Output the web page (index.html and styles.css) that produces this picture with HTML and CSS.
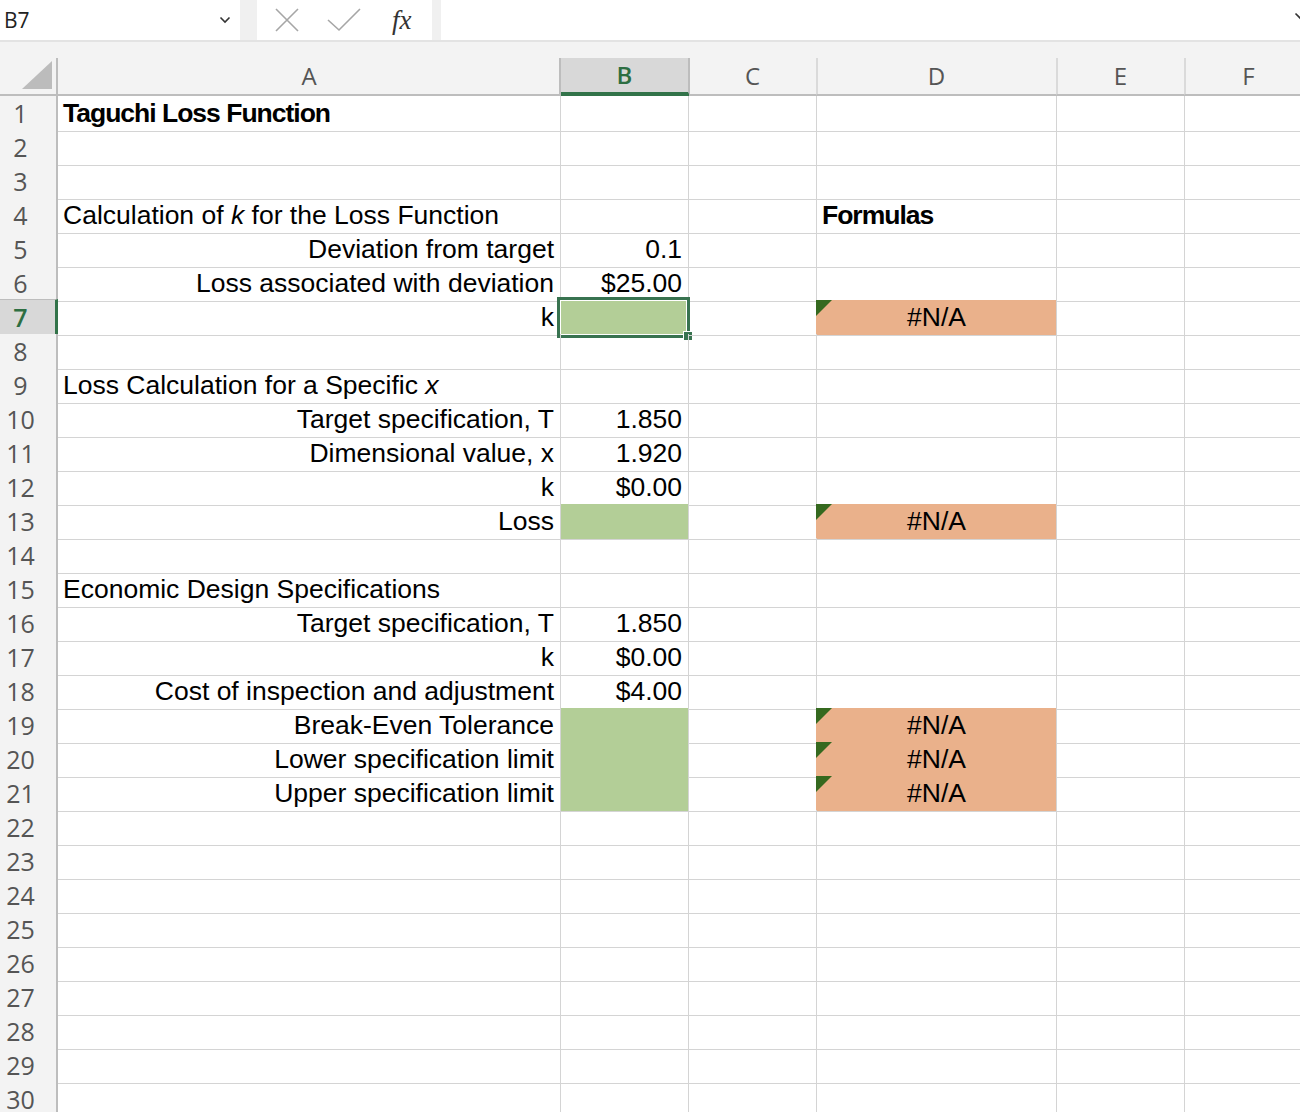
FILE: index.html
```html
<!DOCTYPE html>
<html>
<head>
    <title>Taguchi Loss Function</title>
    <link rel="stylesheet" href="styles.css">
</head>
<body>
    <div class="formula-bar">
        <div class="name-box">
            <span>B7</span>
            <svg class="chevron" width="12" height="8" viewBox="0 0 12 8"><path d="M1.5 1.5 L6 6 L10.5 1.5" fill="none" stroke="#333" stroke-width="1.6"/></svg>
        </div>
        <div class="fx-box">
            <svg width="24" height="24" viewBox="0 0 24 24"><path d="M1 1 L23 23 M23 1 L1 23" stroke="#a6a6a6" stroke-width="1.6" fill="none"/></svg>
            <svg width="34" height="24" viewBox="0 0 34 24"><path d="M1 12 L12 22 L33 1" stroke="#a6a6a6" stroke-width="1.6" fill="none"/></svg>
            <span class="fx">fx</span>
        </div>
        <div class="formula-input">
            <svg class="chevron-right" width="12" height="8" viewBox="0 0 12 8"><path d="M1.5 1.5 L6 6 L10.5 1.5" fill="none" stroke="#333" stroke-width="1.6"/></svg>
        </div>
    </div>

    <div class="sheet">
        <div class="row col-headers">
            <div class="corner"><div class="corner-tri"></div></div>
            <div class="ch">A</div>
            <div class="ch active">B</div>
            <div class="ch">C</div>
            <div class="ch">D</div>
            <div class="ch">E</div>
            <div class="ch">F</div>
        </div>

        <div class="row"><div class="rh">1</div><div class="c title">Taguchi Loss Function</div><div class="c"></div><div class="c"></div><div class="c"></div><div class="c"></div><div class="c"></div></div>
        <div class="row"><div class="rh">2</div><div class="c"></div><div class="c"></div><div class="c"></div><div class="c"></div><div class="c"></div><div class="c"></div></div>
        <div class="row"><div class="rh">3</div><div class="c"></div><div class="c"></div><div class="c"></div><div class="c"></div><div class="c"></div><div class="c"></div></div>
        <div class="row"><div class="rh">4</div><div class="c">Calculation of <i>k</i> for the Loss Function</div><div class="c"></div><div class="c"></div><div class="c title">Formulas</div><div class="c"></div><div class="c"></div></div>
        <div class="row"><div class="rh">5</div><div class="c r">Deviation from target</div><div class="c r">0.1</div><div class="c"></div><div class="c"></div><div class="c"></div><div class="c"></div></div>
        <div class="row"><div class="rh">6</div><div class="c r">Loss associated with deviation</div><div class="c r">$25.00</div><div class="c"></div><div class="c"></div><div class="c"></div><div class="c"></div></div>
        <div class="row"><div class="rh active">7</div><div class="c r">k</div><div class="c green selected"><div class="sel"><div class="handle"></div></div></div><div class="c"></div><div class="c orange note">#N/A</div><div class="c"></div><div class="c"></div></div>
        <div class="row"><div class="rh">8</div><div class="c"></div><div class="c"></div><div class="c"></div><div class="c"></div><div class="c"></div><div class="c"></div></div>
        <div class="row"><div class="rh">9</div><div class="c">Loss Calculation for a Specific <i>x</i></div><div class="c"></div><div class="c"></div><div class="c"></div><div class="c"></div><div class="c"></div></div>
        <div class="row"><div class="rh">10</div><div class="c r">Target specification, T</div><div class="c r">1.850</div><div class="c"></div><div class="c"></div><div class="c"></div><div class="c"></div></div>
        <div class="row"><div class="rh">11</div><div class="c r">Dimensional value, x</div><div class="c r">1.920</div><div class="c"></div><div class="c"></div><div class="c"></div><div class="c"></div></div>
        <div class="row"><div class="rh">12</div><div class="c r">k</div><div class="c r">$0.00</div><div class="c"></div><div class="c"></div><div class="c"></div><div class="c"></div></div>
        <div class="row"><div class="rh">13</div><div class="c r">Loss</div><div class="c green"></div><div class="c"></div><div class="c orange note">#N/A</div><div class="c"></div><div class="c"></div></div>
        <div class="row"><div class="rh">14</div><div class="c"></div><div class="c"></div><div class="c"></div><div class="c"></div><div class="c"></div><div class="c"></div></div>
        <div class="row"><div class="rh">15</div><div class="c">Economic Design Specifications</div><div class="c"></div><div class="c"></div><div class="c"></div><div class="c"></div><div class="c"></div></div>
        <div class="row"><div class="rh">16</div><div class="c r">Target specification, T</div><div class="c r">1.850</div><div class="c"></div><div class="c"></div><div class="c"></div><div class="c"></div></div>
        <div class="row"><div class="rh">17</div><div class="c r">k</div><div class="c r">$0.00</div><div class="c"></div><div class="c"></div><div class="c"></div><div class="c"></div></div>
        <div class="row"><div class="rh">18</div><div class="c r">Cost of inspection and adjustment</div><div class="c r">$4.00</div><div class="c"></div><div class="c"></div><div class="c"></div><div class="c"></div></div>
        <div class="row"><div class="rh">19</div><div class="c r">Break-Even Tolerance</div><div class="c green joined"></div><div class="c"></div><div class="c orange joined note">#N/A</div><div class="c"></div><div class="c"></div></div>
        <div class="row"><div class="rh">20</div><div class="c r">Lower specification limit</div><div class="c green joined"></div><div class="c"></div><div class="c orange joined note">#N/A</div><div class="c"></div><div class="c"></div></div>
        <div class="row"><div class="rh">21</div><div class="c r">Upper specification limit</div><div class="c green"></div><div class="c"></div><div class="c orange note">#N/A</div><div class="c"></div><div class="c"></div></div>
        <div class="row"><div class="rh">22</div><div class="c"></div><div class="c"></div><div class="c"></div><div class="c"></div><div class="c"></div><div class="c"></div></div>
        <div class="row"><div class="rh">23</div><div class="c"></div><div class="c"></div><div class="c"></div><div class="c"></div><div class="c"></div><div class="c"></div></div>
        <div class="row"><div class="rh">24</div><div class="c"></div><div class="c"></div><div class="c"></div><div class="c"></div><div class="c"></div><div class="c"></div></div>
        <div class="row"><div class="rh">25</div><div class="c"></div><div class="c"></div><div class="c"></div><div class="c"></div><div class="c"></div><div class="c"></div></div>
        <div class="row"><div class="rh">26</div><div class="c"></div><div class="c"></div><div class="c"></div><div class="c"></div><div class="c"></div><div class="c"></div></div>
        <div class="row"><div class="rh">27</div><div class="c"></div><div class="c"></div><div class="c"></div><div class="c"></div><div class="c"></div><div class="c"></div></div>
        <div class="row"><div class="rh">28</div><div class="c"></div><div class="c"></div><div class="c"></div><div class="c"></div><div class="c"></div><div class="c"></div></div>
        <div class="row"><div class="rh">29</div><div class="c"></div><div class="c"></div><div class="c"></div><div class="c"></div><div class="c"></div><div class="c"></div></div>
        <div class="row"><div class="rh">30</div><div class="c"></div><div class="c"></div><div class="c"></div><div class="c"></div><div class="c"></div><div class="c"></div></div>
    </div>
</body>
</html>
```

FILE: styles.css
```css
html, body {
    margin: 0;
    padding: 0;
    overflow: hidden;
    background-color: #fff;
}
body {
    width: 1300px;
    height: 1112px;
}
.formula-bar {
    display: flex;
    height: 40px;
    background-color: #f0f0f0;
    border-bottom: 2px solid #e3e3e3;
}
.name-box {
    width: 240px;
    background-color: #fff;
    display: flex;
    align-items: center;
    justify-content: space-between;
    padding: 0 9px 0 4px;
    box-sizing: border-box;
    font-family: "Open Sans", sans-serif;
    font-size: 21px;
    color: #222;
}
.fx-box {
    width: 175px;
    margin-left: 17px;
    background-color: #fff;
    display: flex;
    align-items: center;
    padding-left: 18px;
    gap: 28px;
    box-sizing: border-box;
}
.fx {
    font-family: "Liberation Serif", serif;
    font-style: italic;
    font-size: 27px;
    color: #333;
    margin-left: 3px;
}
.formula-input {
    flex: 1;
    margin-left: 9px;
    background-color: #fff;
    position: relative;
}
.chevron-right {
    position: absolute;
    right: -6px;
    top: 12px;
}
.sheet {
    background-color: #fff;
}
.row {
    display: grid;
    grid-template-columns: 58px 503px 128px 128px 240px 128px 128px;
    height: 34px;
}
.col-headers {
    height: 54px;
    background-color: #f3f3f3;
}
.corner {
    border-right: 2px solid #bdbdbd;
    border-bottom: 2px solid #bdbdbd;
    margin-top: 16px;
    position: relative;
}
.corner-tri {
    position: absolute;
    right: 4px;
    bottom: 5px;
    width: 0;
    height: 0;
    border-left: 30px solid transparent;
    border-bottom: 28px solid #bcbcbc;
}
.ch {
    margin-top: 16px;
    border-bottom: 2px solid #bdbdbd;
    border-right: 2px solid #dadada;
    margin-right: -1px;
    font-family: "Open Sans", sans-serif;
    font-size: 24px;
    color: #555;
    text-align: center;
    line-height: 35px;
}
.ch.active {
    background-color: #d8d8d8;
    color: #2d6e42;
    font-weight: 600;
    border-bottom: 4px solid #327349;
    line-height: 33px;
    border-right-color: #bdbdbd;
    box-shadow: -2px 0 0 #bdbdbd;
}
.rh {
    background-color: #f3f3f3;
    border-right: 2px solid #bdbdbd;
    border-bottom: 1px solid #d4d4d4;
    font-family: "Open Sans", sans-serif;
    font-size: 25px;
    color: #555;
    line-height: 35px;
    text-align: center;
    padding-right: 15px;
    box-sizing: border-box;
}
.rh.active {
    background-color: #d8d8d8;
    color: #2d6e42;
    font-weight: 600;
    border-right: 3px solid #327349;
    border-top: 1px solid #bdbdbd;
    margin-top: -1px;
    padding-right: 14px;
}
.c {
    border-right: 1px solid #d4d4d4;
    border-bottom: 1px solid #d4d4d4;
    box-sizing: border-box;
    padding: 0 5px;
    font-family: "Liberation Sans", Arial, sans-serif;
    font-size: 26.5px;
    line-height: 35px;
    color: #000;
    white-space: nowrap;
    position: relative;
}
.c.r {
    text-align: right;
    padding-right: 6px;
}
.c.title {
    font-weight: bold;
    letter-spacing: -1px;
}
.green {
    background-color: #b3ce97;
}
.orange {
    background-color: #eab18b;
    text-align: center;
    box-shadow: -1px 0 0 #eab18b;
}
.green.joined {
    border-bottom-color: #b3ce97;
}
.orange.joined {
    border-bottom-color: #eab18b;
}
.note::before {
    content: "";
    position: absolute;
    left: -1px;
    top: 0;
    width: 0;
    height: 0;
    border-top: 16px solid #35691f;
    border-right: 16px solid transparent;
}
.sel {
    position: absolute;
    left: -4px;
    top: -3px;
    right: -2px;
    bottom: -3px;
    border: 3px solid #387350;
    box-shadow: inset 0 0 0 1px #fff;
}
.handle {
    position: absolute;
    right: -6px;
    bottom: -6px;
    width: 8px;
    height: 8px;
    background-color: #387350;
    border: 1px solid #fff;
}
```
